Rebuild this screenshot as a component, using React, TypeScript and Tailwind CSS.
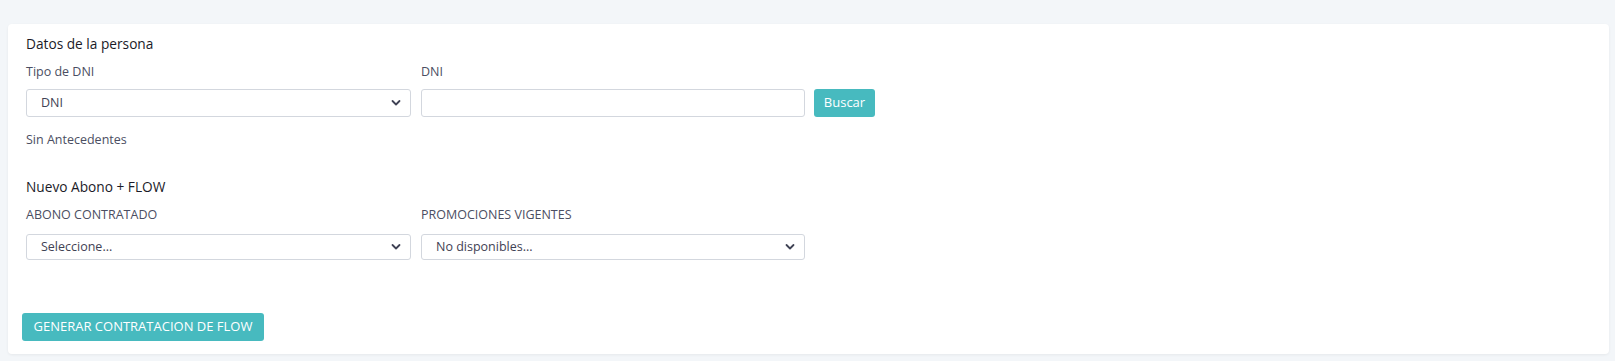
import React from "react";

function Chevron() {
  return (
    <svg
      className="pointer-events-none absolute right-[10px] top-1/2 -translate-y-1/2"
      width="10"
      height="7"
      viewBox="0 0 10 7"
      fill="none"
    >
      <path d="M1.5 1.5L5 5L8.5 1.5" stroke="#3f4254" strokeWidth="1.8" strokeLinecap="round" strokeLinejoin="round" />
    </svg>
  );
}

function Select({ value, h, w }: { value: string; h: string; w: string }) {
  return (
    <div className={`relative ${w}`}>
      <select
        defaultValue={value}
        className={`${h} block w-full appearance-none rounded-[3px] border border-[#d3d7de] bg-white pl-[14px] text-[12.5px] text-[#3f4254] outline-none`}
      >
        <option>{value}</option>
      </select>
      <Chevron />
    </div>
  );
}

export default function App() {
  return (
    <div className="h-[361px] overflow-hidden bg-[#f3f6f9] pl-[8px] pr-[6px] pt-[24px] font-['Open_Sans',sans-serif]">
      <div className="rounded-[4px] bg-white pb-[13px] pl-[18px] pt-[10px] shadow-[0_1px_3px_rgba(0,0,0,0.06)]">
        <div className="h-[20px] text-[13.7px] leading-[20px] text-[#1b1b28]">Datos de la persona</div>

        <div className="mt-[8px] flex h-[20px] text-[12.5px] leading-[20px] text-[#4b4e62]">
          <div className="w-[395px]">Tipo de DNI</div>
          <div>DNI</div>
        </div>

        <div className="mt-[7px] flex items-center">
          <Select value="DNI" h="h-[28px]" w="w-[385px]" />
          <input
            type="text"
            className="ml-[10px] block h-[28px] w-[384px] rounded-[3px] border border-[#d3d7de] bg-white outline-none"
          />
          <button className="ml-[9px] block h-[28px] w-[61px] rounded-[3px] bg-[#47babf] text-[13px] text-white">
            Buscar
          </button>
        </div>

        <div className="mt-[13px] h-[20px] text-[12.5px] leading-[20px] text-[#4b4e62]">Sin Antecedentes</div>

        <div className="mt-[27px] h-[20px] text-[13.7px] leading-[20px] text-[#1b1b28]">Nuevo Abono + FLOW</div>

        <div className="mt-[8px] flex h-[20px] text-[12.5px] leading-[20px] text-[#4b4e62]">
          <div className="w-[395px]">ABONO CONTRATADO</div>
          <div>PROMOCIONES VIGENTES</div>
        </div>

        <div className="mt-[9px] flex items-center gap-[10px]">
          <Select value="Seleccione..." h="h-[26px]" w="w-[385px]" />
          <Select value="No disponibles..." h="h-[26px]" w="w-[384px]" />
        </div>

        <button className="ml-[-4px] mt-[53px] block h-[28px] w-[242px] rounded-[3px] bg-[#47babf] text-[13px] text-white">
          GENERAR CONTRATACION DE FLOW
        </button>
      </div>
    </div>
  );
}
